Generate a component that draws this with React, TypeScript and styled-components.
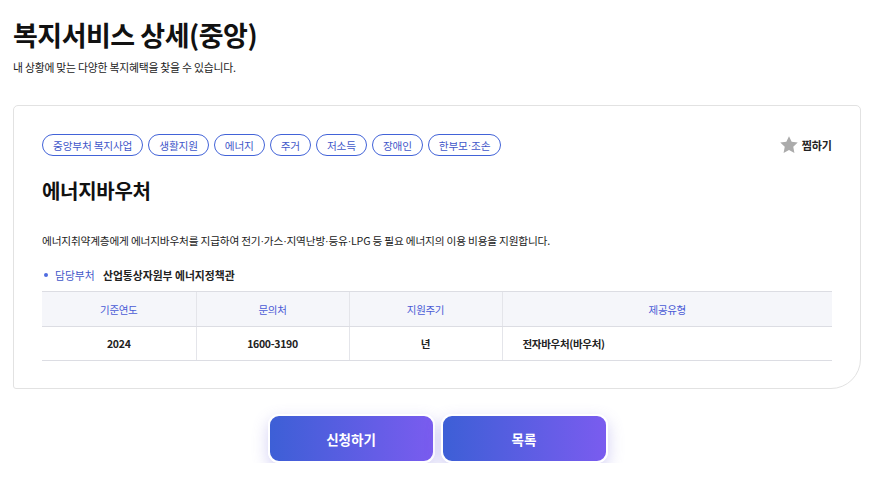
import * as React from 'react'
import styled, { createGlobalStyle } from 'styled-components'

const GlobalStyle = createGlobalStyle`
	body {
		margin: 0;
		background: #fff;
		font-family: "Noto Sans CJK KR", "Noto Sans", sans-serif;
		color: #111;
	}
`

const Page = styled.div`
	padding: 16px 11px 0 13px;
`

const Title = styled.h1`
	margin: 0;
	font-size: 27px;
	font-weight: 700;
	line-height: 38px;
	letter-spacing: -0.5px;
	color: #111;
`

const Subtitle = styled.p`
	margin: 5px 0 0;
	font-size: 10.8px;
	line-height: 16px;
	color: #222;
	letter-spacing: -0.2px;
`

const Card = styled.section`
	margin-top: 30px;
	border: 1px solid #e2e2e2;
	border-radius: 5px 5px 30px 3px;
	padding: 28px 28px 28px 28px;
	height: 284px;
	box-sizing: border-box;
`

const TopRow = styled.div`
	display: flex;
	align-items: center;
	justify-content: space-between;
`

const Tags = styled.div`
	display: flex;
	gap: 5px;
`

const Tag = styled.span`
	display: inline-flex;
	align-items: center;
	height: 22px;
	box-sizing: border-box;
	padding: 0 10px;
	border: 1px solid #4263d8;
	border-radius: 12px;
	font-size: 10.7px;
	color: #3f57c9;
	letter-spacing: -0.2px;
`

const Mid = styled.span`
	font-family: "Liberation Sans", sans-serif;
`

const Zzim = styled.button`
	display: flex;
	align-items: center;
	gap: 3px;
	border: 0;
	background: none;
	padding: 0;
	font-family: inherit;
	font-size: 11px;
	font-weight: 700;
	color: #222;
	cursor: pointer;
`

const Heading = styled.h2`
	margin: 20px 0 0;
	font-size: 20px;
	line-height: 30px;
	font-weight: 700;
	letter-spacing: -0.3px;
`

const Desc = styled.p`
	margin: 27px 0 0;
	font-size: 10.7px;
	line-height: 16px;
	color: #222;
	letter-spacing: -0.2px;
`

const Dept = styled.div`
	display: flex;
	align-items: center;
	margin-top: 18px;
	font-size: 10.8px;
	line-height: 16px;
`

const Dot = styled.span`
	width: 4px;
	height: 4px;
	border-radius: 50%;
	background: #4f6be0;
	margin: 0 7px 0 2px;
`

const DeptLabel = styled.span`
	color: #3f57c9;
	width: 48px;
`

const DeptName = styled.span`
	font-weight: 700;
	color: #222;
`

const Table = styled.table`
	width: 100%;
	margin-top: 8px;
	border-collapse: collapse;
	font-size: 10.5px;
`

const Th = styled.th`
	height: 34px;
	padding: 0;
	background: #f5f6fa;
	border-top: 1px solid #dcdde3;
	border-bottom: 1px solid #dcdde3;
	border-left: 1px solid #e4e5ea;
	font-weight: 400;
	color: #4a5bd6;
	letter-spacing: -0.3px;
	&:first-child { border-left: 0; }
`

const Td = styled.td<{ $left?: boolean }>`
	height: 33px;
	padding: ${p => (p.$left ? '0 0 0 20px' : '0')};
	text-align: ${p => (p.$left ? 'left' : 'center')};
	border-bottom: 1px solid #dcdde3;
	border-left: 1px solid #e4e5ea;
	font-weight: 700;
	color: #222;
	letter-spacing: -0.3px;
	&:first-child { border-left: 0; }
`

const Actions = styled.div`
	display: flex;
	justify-content: center;
	gap: 6px;
	margin-top: 25px;
	padding-left: 1px;
`

const Button = styled.button`
	width: 167px;
	height: 49px;
	border: 2px solid #fff;
	border-radius: 11px;
	background: linear-gradient(90deg, #3d5fd6 0%, #7a5cef 100%);
	box-shadow: 0 6px 16px rgba(110, 100, 220, 0.3);
	color: #fff;
	font-family: inherit;
	font-size: 13.5px;
	font-weight: 700;
	cursor: pointer;
`

const tags = ['중앙부처 복지사업', '생활지원', '에너지', '주거', '저소득', '장애인']

const Star = () => (
  <svg width="20" height="20" viewBox="0 0 24 24">
    <path
      d="M12 1.5l3.2 6.7 7.3.9-5.4 5.1 1.4 7.3L12 17.9l-6.5 3.6 1.4-7.3-5.4-5.1 7.3-.9z"
      fill="#ababab"
    />
  </svg>
)

export default function App() {
  return (
    <Page>
      <GlobalStyle />
      <Title>복지서비스 상세(중앙)</Title>
      <Subtitle>내 상황에 맞는 다양한 복지혜택을 찾을 수 있습니다.</Subtitle>
      <Card>
        <TopRow>
          <Tags>
            {tags.map(t => (
              <Tag key={t}>{t}</Tag>
            ))}
            <Tag>
              한부모<Mid>·</Mid>조손
            </Tag>
          </Tags>
          <Zzim>
            <Star />
            찜하기
          </Zzim>
        </TopRow>
        <Heading>에너지바우처</Heading>
        <Desc>
          에너지취약계층에게 에너지바우처를 지급하여 전기<Mid>·</Mid>가스<Mid>·</Mid>지역난방
          <Mid>·</Mid>등유<Mid>·</Mid>LPG 등 필요 에너지의 이용 비용을 지원합니다.
        </Desc>
        <Dept>
          <Dot />
          <DeptLabel>담당부처</DeptLabel>
          <DeptName>산업통상자원부 에너지정책관</DeptName>
        </Dept>
        <Table>
          <colgroup>
            <col style={{ width: 154 }} />
            <col style={{ width: 153 }} />
            <col style={{ width: 153 }} />
            <col />
          </colgroup>
          <thead>
            <tr>
              <Th>기준연도</Th>
              <Th>문의처</Th>
              <Th>지원주기</Th>
              <Th>제공유형</Th>
            </tr>
          </thead>
          <tbody>
            <tr>
              <Td>2024</Td>
              <Td>1600-3190</Td>
              <Td>년</Td>
              <Td $left>전자바우처(바우처)</Td>
            </tr>
          </tbody>
        </Table>
      </Card>
      <Actions>
        <Button>신청하기</Button>
        <Button>목록</Button>
      </Actions>
    </Page>
  )
}
